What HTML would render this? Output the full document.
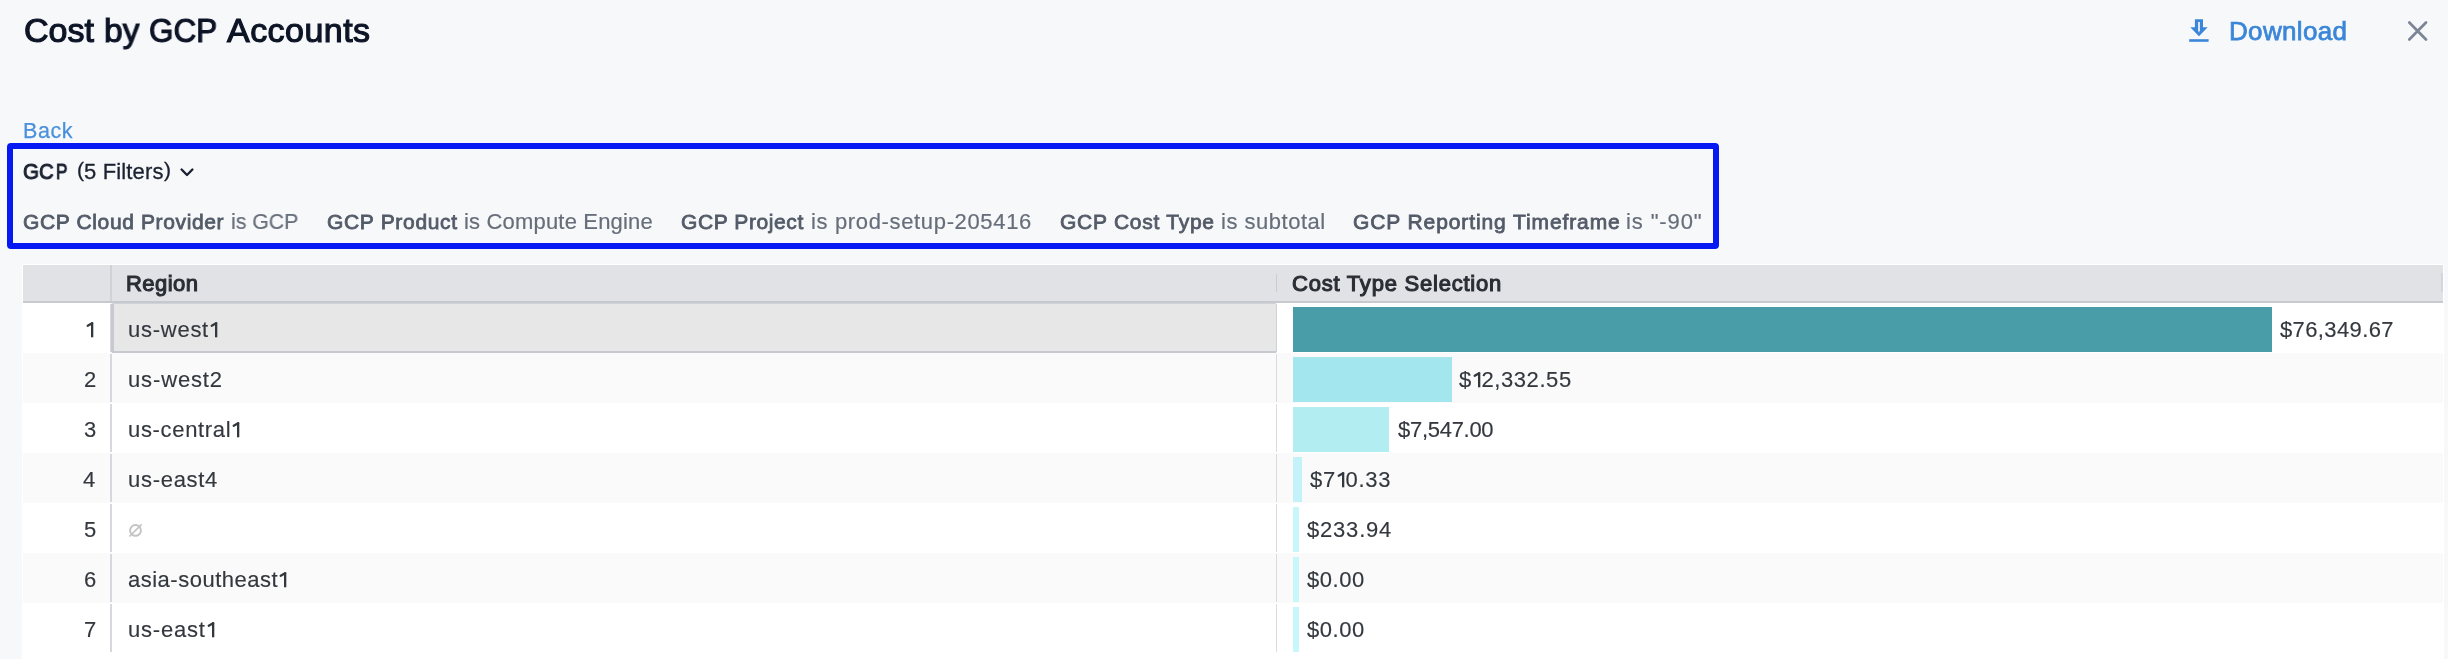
<!DOCTYPE html>
<html><head><meta charset="utf-8"><style>
div,svg{will-change:transform;}
html,body{margin:0;padding:0;background:#ffffff;width:2448px;height:672px;overflow:hidden;font-family:"Liberation Sans", sans-serif;}
</style></head><body>
<div style="position:absolute;left:0px;top:0px;width:2448px;height:659px;background:#f7f8fa"></div>
<div style="position:absolute;left:23.56px;top:13px;font-size:34px;line-height:34px;font-weight:400;color:#0c1426;letter-spacing:0.008px;white-space:pre;-webkit-text-stroke:1.15px #0c1426">Cost</div>
<div style="position:absolute;left:103.78px;top:13px;font-size:34px;line-height:34px;font-weight:400;color:#0c1426;transform:scaleX(0.9842);transform-origin:0 0;white-space:pre;-webkit-text-stroke:1.15px #0c1426">by</div>
<div style="position:absolute;left:149.44px;top:13px;font-size:34px;line-height:34px;font-weight:400;color:#0c1426;transform:scaleX(0.9245);transform-origin:0 0;white-space:pre;-webkit-text-stroke:1.15px #0c1426">GCP</div>
<div style="position:absolute;left:227.48px;top:13px;font-size:34px;line-height:34px;font-weight:400;color:#0c1426;letter-spacing:0.460px;white-space:pre;-webkit-text-stroke:1.15px #0c1426">Accounts</div>
<svg style="position:absolute;left:2186px;top:16px" width="26" height="30" viewBox="0 0 26 30">
<path d="M8.9 3.2 H17 V11.3 H21.7 L12.95 20.2 L4.3 11.3 H8.9 Z" fill="#3b86d8"/>
<path d="M12.15 5.9 H13.85 V14.2 L13 16.8 L12.15 14.2 Z" fill="#f7f8fa"/>
<rect x="3.2" y="23.2" width="19.4" height="2.6" fill="#3b86d8"/>
</svg>
<div style="position:absolute;left:2229.27px;top:18.1px;font-size:26px;line-height:26px;font-weight:400;color:#3b86d8;letter-spacing:0.346px;white-space:pre;-webkit-text-stroke:0.75px #3b86d8">Download</div>
<svg style="position:absolute;left:2400px;top:14px" width="36" height="36" viewBox="0 0 36 36">
<path d="M9.3 8.5 L26 25.5 M26 8.5 L9.3 25.5" stroke="#7c8595" stroke-width="2.7" stroke-linecap="round"/>
</svg>
<div style="position:absolute;left:22.77px;top:120.9px;font-size:21.5px;line-height:21.5px;font-weight:400;color:#4a90dc;letter-spacing:0.550px;white-space:pre;-webkit-text-stroke:0.25px #4a90dc">Back</div>
<div style="position:absolute;left:7px;top:143px;width:1712px;height:106px;box-sizing:border-box;border:6px solid #0619f2;border-radius:4px"></div>
<div style="position:absolute;left:23.03px;top:161.9px;font-size:21.5px;line-height:21.5px;font-weight:400;color:#1a2130;transform:scaleX(0.9528);transform-origin:0 0;white-space:pre;-webkit-text-stroke:1.0px #1a2130">G</div>
<div style="position:absolute;left:39.03px;top:161.9px;font-size:21.5px;line-height:21.5px;font-weight:400;color:#1a2130;transform:scaleX(0.9450);transform-origin:0 0;white-space:pre;-webkit-text-stroke:1.0px #1a2130">C</div>
<div style="position:absolute;left:56.33px;top:161.9px;font-size:21.5px;line-height:21.5px;font-weight:400;color:#1a2130;transform:scaleX(0.7981);transform-origin:0 0;white-space:pre;-webkit-text-stroke:1.0px #1a2130">P</div>
<div style="position:absolute;left:76.57px;top:159px;font-size:21px;line-height:21px;font-weight:400;color:#1a2130;letter-spacing:0.000px;white-space:pre;-webkit-text-stroke:0.3px #1a2130">(</div>
<div style="position:absolute;left:84.11px;top:160.9px;font-size:22px;line-height:22px;font-weight:400;color:#1a2130;letter-spacing:0.145px;white-space:pre;-webkit-text-stroke:0.3px #1a2130">5 Filters</div>
<div style="position:absolute;left:163.7px;top:159px;font-size:21px;line-height:21px;font-weight:400;color:#1a2130;letter-spacing:0.000px;white-space:pre;-webkit-text-stroke:0.3px #1a2130">)</div>
<svg style="position:absolute;left:178px;top:165px" width="18" height="14" viewBox="0 0 18 14">
<path d="M3.6 4.5 L9 10 L14.4 4.5" fill="none" stroke="#1a2130" stroke-width="2.4" stroke-linecap="round" stroke-linejoin="round"/>
</svg>
<div style="position:absolute;left:23.22px;top:210.5px;font-size:21px;line-height:21px;font-weight:400;color:#535b68;letter-spacing:0.629px;white-space:pre;-webkit-text-stroke:0.8px #535b68">GCP Cloud Provider</div>
<div style="position:absolute;left:231.05px;top:210.5px;font-size:22px;line-height:22px;font-weight:400;color:#666e7a;transform:scaleX(0.9664);transform-origin:0 0;white-space:pre;-webkit-text-stroke:0.2px #666e7a">is GCP</div>
<div style="position:absolute;left:327.02px;top:210.5px;font-size:21px;line-height:21px;font-weight:400;color:#535b68;letter-spacing:0.679px;white-space:pre;-webkit-text-stroke:0.8px #535b68">GCP Product</div>
<div style="position:absolute;left:464.02px;top:210.5px;font-size:22px;line-height:22px;font-weight:400;color:#666e7a;letter-spacing:0.179px;white-space:pre;-webkit-text-stroke:0.2px #666e7a">is Compute Engine</div>
<div style="position:absolute;left:681.42px;top:210.5px;font-size:21px;line-height:21px;font-weight:400;color:#535b68;letter-spacing:0.589px;white-space:pre;-webkit-text-stroke:0.8px #535b68">GCP Project</div>
<div style="position:absolute;left:810.52px;top:210.5px;font-size:22px;line-height:22px;font-weight:400;color:#666e7a;letter-spacing:0.650px;white-space:pre;-webkit-text-stroke:0.2px #666e7a">is prod-setup-205416</div>
<div style="position:absolute;left:1059.72px;top:210.5px;font-size:21px;line-height:21px;font-weight:400;color:#535b68;letter-spacing:0.740px;white-space:pre;-webkit-text-stroke:0.8px #535b68">GCP Cost Type</div>
<div style="position:absolute;left:1220.72px;top:210.5px;font-size:22px;line-height:22px;font-weight:400;color:#666e7a;letter-spacing:0.512px;white-space:pre;-webkit-text-stroke:0.2px #666e7a">is subtotal</div>
<div style="position:absolute;left:1353.32px;top:210.5px;font-size:21px;line-height:21px;font-weight:400;color:#535b68;letter-spacing:0.895px;white-space:pre;-webkit-text-stroke:0.8px #535b68">GCP Reporting Timeframe</div>
<div style="position:absolute;left:1626.32px;top:210.5px;font-size:22px;line-height:22px;font-weight:400;color:#666e7a;letter-spacing:0.878px;white-space:pre;-webkit-text-stroke:0.2px #666e7a">is &quot;-90&quot;</div>
<div style="position:absolute;left:22px;top:264px;width:2422px;height:395px;background:#ffffff"></div>
<div style="position:absolute;left:23px;top:265px;width:2420px;height:36px;background:#e1e2e6"></div>
<div style="position:absolute;left:23px;top:301px;width:2420px;height:2px;background:#c6cacf"></div>
<div style="position:absolute;left:110px;top:265px;width:2px;height:36px;background:#cfd2d7"></div>
<div style="position:absolute;left:1276px;top:274px;width:1px;height:18px;background:#c9ccd1"></div>
<div style="position:absolute;left:2441px;top:273px;width:2px;height:19px;background:#d2d5da"></div>
<div style="position:absolute;left:126.14px;top:273.2px;font-size:22px;line-height:22px;font-weight:400;color:#2a2e35;letter-spacing:0.430px;white-space:pre;-webkit-text-stroke:1.1px #2a2e35">Region</div>
<div style="position:absolute;left:1291.72px;top:273.2px;font-size:22px;line-height:22px;font-weight:400;color:#2a2e35;letter-spacing:0.779px;white-space:pre;-webkit-text-stroke:1.1px #2a2e35">Cost Type Selection</div>
<div style="position:absolute;left:110px;top:304px;width:2px;height:48px;background:#d5d8dc"></div>
<div style="position:absolute;left:1276px;top:304px;width:1px;height:48px;background:#d8dbdf"></div>
<div style="position:absolute;left:111px;top:303px;width:1166px;height:50px;box-sizing:border-box;background:#e7e7e7;border-left:3px solid #c6cacf;border-top:1px solid #cfd3d7;border-bottom:2px solid #c6cacf;border-right:1px solid #cfd2d6;border-radius:2px"></div>
<div style="position:absolute;left:85.06px;top:319px;font-size:22px;line-height:22px;font-weight:400;color:#33373e;letter-spacing:0.000px;white-space:pre;-webkit-text-stroke:0.15px #33373e"><span style="display:inline-block;width:9.0px;height:22px;vertical-align:top;margin-right:0.000px;position:relative"><svg style="position:absolute;left:0;top:0" width="9.0" height="22" viewBox="0 0 9.0 22"><path d="M6.00 3.4 H8.3 V18.3 H6.00 Z" fill="#33373e"/><path d="M7.10 4.30 L2.70 6.80" stroke="#33373e" stroke-width="2.3" stroke-linecap="round"/></svg></span></div>
<div style="position:absolute;left:127.79px;top:319px;font-size:22px;line-height:22px;font-weight:400;color:#33373e;letter-spacing:0.739px;white-space:pre;-webkit-text-stroke:0.15px #33373e">us-west<span style="display:inline-block;width:9.0px;height:22px;vertical-align:top;margin-right:0.739px;position:relative"><svg style="position:absolute;left:0;top:0" width="9.0" height="22" viewBox="0 0 9.0 22"><path d="M6.00 3.4 H8.3 V18.3 H6.00 Z" fill="#33373e"/><path d="M7.10 4.30 L2.70 6.80" stroke="#33373e" stroke-width="2.3" stroke-linecap="round"/></svg></span></div>
<div style="position:absolute;left:1293px;top:307px;width:978.7px;height:44.6px;background:#489da8"></div>
<div style="position:absolute;left:2279.66px;top:319px;font-size:22px;line-height:22px;font-weight:400;color:#33373e;letter-spacing:0.387px;white-space:pre;-webkit-text-stroke:0.15px #33373e">$76,349.67</div>
<div style="position:absolute;left:23px;top:353px;width:2420px;height:50px;background:#fafafa"></div>
<div style="position:absolute;left:110px;top:354px;width:2px;height:48px;background:#d5d8dc"></div>
<div style="position:absolute;left:1276px;top:354px;width:1px;height:48px;background:#d8dbdf"></div>
<div style="position:absolute;left:83.67px;top:369px;font-size:22px;line-height:22px;font-weight:400;color:#33373e;letter-spacing:0.000px;white-space:pre;-webkit-text-stroke:0.15px #33373e">2</div>
<div style="position:absolute;left:127.79px;top:369px;font-size:22px;line-height:22px;font-weight:400;color:#33373e;letter-spacing:0.865px;white-space:pre;-webkit-text-stroke:0.15px #33373e">us-west2</div>
<div style="position:absolute;left:1293px;top:357px;width:158.8px;height:44.6px;background:#a3e6ed"></div>
<div style="position:absolute;left:1459.06px;top:369px;font-size:22px;line-height:22px;font-weight:400;color:#33373e;letter-spacing:0.588px;white-space:pre;-webkit-text-stroke:0.15px #33373e">$<span style="display:inline-block;width:9.0px;height:22px;vertical-align:top;margin-right:0.588px;position:relative"><svg style="position:absolute;left:0;top:0" width="9.0" height="22" viewBox="0 0 9.0 22"><path d="M6.00 3.4 H8.3 V18.3 H6.00 Z" fill="#33373e"/><path d="M7.10 4.30 L2.70 6.80" stroke="#33373e" stroke-width="2.3" stroke-linecap="round"/></svg></span>2,332.55</div>
<div style="position:absolute;left:110px;top:404px;width:2px;height:48px;background:#d5d8dc"></div>
<div style="position:absolute;left:1276px;top:404px;width:1px;height:48px;background:#d8dbdf"></div>
<div style="position:absolute;left:83.58px;top:419px;font-size:22px;line-height:22px;font-weight:400;color:#33373e;letter-spacing:0.000px;white-space:pre;-webkit-text-stroke:0.15px #33373e">3</div>
<div style="position:absolute;left:127.79px;top:419px;font-size:22px;line-height:22px;font-weight:400;color:#33373e;letter-spacing:0.667px;white-space:pre;-webkit-text-stroke:0.15px #33373e">us-central<span style="display:inline-block;width:9.0px;height:22px;vertical-align:top;margin-right:0.667px;position:relative"><svg style="position:absolute;left:0;top:0" width="9.0" height="22" viewBox="0 0 9.0 22"><path d="M6.00 3.4 H8.3 V18.3 H6.00 Z" fill="#33373e"/><path d="M7.10 4.30 L2.70 6.80" stroke="#33373e" stroke-width="2.3" stroke-linecap="round"/></svg></span></div>
<div style="position:absolute;left:1293px;top:407px;width:96.4px;height:44.6px;background:#b2eef1"></div>
<div style="position:absolute;left:1397.86px;top:419px;font-size:22px;line-height:22px;font-weight:400;color:#33373e;letter-spacing:-0.285px;white-space:pre;-webkit-text-stroke:0.15px #33373e">$7,547.00</div>
<div style="position:absolute;left:23px;top:453px;width:2420px;height:50px;background:#fafafa"></div>
<div style="position:absolute;left:110px;top:454px;width:2px;height:48px;background:#d5d8dc"></div>
<div style="position:absolute;left:1276px;top:454px;width:1px;height:48px;background:#d8dbdf"></div>
<div style="position:absolute;left:83.3px;top:469px;font-size:22px;line-height:22px;font-weight:400;color:#33373e;letter-spacing:0.000px;white-space:pre;-webkit-text-stroke:0.15px #33373e">4</div>
<div style="position:absolute;left:127.79px;top:469px;font-size:22px;line-height:22px;font-weight:400;color:#33373e;letter-spacing:0.709px;white-space:pre;-webkit-text-stroke:0.15px #33373e">us-east4</div>
<div style="position:absolute;left:1293px;top:457px;width:9.2px;height:44.6px;background:#c3f3f8"></div>
<div style="position:absolute;left:1309.66px;top:469px;font-size:22px;line-height:22px;font-weight:400;color:#33373e;letter-spacing:0.703px;white-space:pre;-webkit-text-stroke:0.15px #33373e">$7<span style="display:inline-block;width:9.0px;height:22px;vertical-align:top;margin-right:0.703px;position:relative"><svg style="position:absolute;left:0;top:0" width="9.0" height="22" viewBox="0 0 9.0 22"><path d="M6.00 3.4 H8.3 V18.3 H6.00 Z" fill="#33373e"/><path d="M7.10 4.30 L2.70 6.80" stroke="#33373e" stroke-width="2.3" stroke-linecap="round"/></svg></span>0.33</div>
<div style="position:absolute;left:110px;top:504px;width:2px;height:48px;background:#d5d8dc"></div>
<div style="position:absolute;left:1276px;top:504px;width:1px;height:48px;background:#d8dbdf"></div>
<div style="position:absolute;left:83.55px;top:519px;font-size:22px;line-height:22px;font-weight:400;color:#33373e;letter-spacing:0.000px;white-space:pre;-webkit-text-stroke:0.15px #33373e">5</div>
<svg style="position:absolute;left:126px;top:522px" width="18" height="18" viewBox="0 0 18 18"><circle cx="9.5" cy="8.4" r="5.4" fill="none" stroke="#c4c4c4" stroke-width="1.9"/><path d="M3.9 14 L15.1 2.8" stroke="#c4c4c4" stroke-width="1.7" stroke-linecap="round"/></svg>
<div style="position:absolute;left:1293px;top:507px;width:5.5px;height:44.6px;background:#c9f6fa"></div>
<div style="position:absolute;left:1306.96px;top:519px;font-size:22px;line-height:22px;font-weight:400;color:#33373e;letter-spacing:0.799px;white-space:pre;-webkit-text-stroke:0.15px #33373e">$233.94</div>
<div style="position:absolute;left:23px;top:553px;width:2420px;height:50px;background:#fafafa"></div>
<div style="position:absolute;left:110px;top:554px;width:2px;height:48px;background:#d5d8dc"></div>
<div style="position:absolute;left:1276px;top:554px;width:1px;height:48px;background:#d8dbdf"></div>
<div style="position:absolute;left:83.61px;top:569px;font-size:22px;line-height:22px;font-weight:400;color:#33373e;letter-spacing:0.000px;white-space:pre;-webkit-text-stroke:0.15px #33373e">6</div>
<div style="position:absolute;left:128.37px;top:569px;font-size:22px;line-height:22px;font-weight:400;color:#33373e;letter-spacing:0.500px;white-space:pre;-webkit-text-stroke:0.15px #33373e">asia-southeast<span style="display:inline-block;width:9.0px;height:22px;vertical-align:top;margin-right:0.500px;position:relative"><svg style="position:absolute;left:0;top:0" width="9.0" height="22" viewBox="0 0 9.0 22"><path d="M6.00 3.4 H8.3 V18.3 H6.00 Z" fill="#33373e"/><path d="M7.10 4.30 L2.70 6.80" stroke="#33373e" stroke-width="2.3" stroke-linecap="round"/></svg></span></div>
<div style="position:absolute;left:1293px;top:557px;width:5.5px;height:44.6px;background:#c9f6fa"></div>
<div style="position:absolute;left:1306.96px;top:569px;font-size:22px;line-height:22px;font-weight:400;color:#33373e;letter-spacing:0.555px;white-space:pre;-webkit-text-stroke:0.15px #33373e">$0.00</div>
<div style="position:absolute;left:110px;top:604px;width:2px;height:48px;background:#d5d8dc"></div>
<div style="position:absolute;left:1276px;top:604px;width:1px;height:48px;background:#d8dbdf"></div>
<div style="position:absolute;left:83.67px;top:619px;font-size:22px;line-height:22px;font-weight:400;color:#33373e;letter-spacing:0.000px;white-space:pre;-webkit-text-stroke:0.15px #33373e">7</div>
<div style="position:absolute;left:127.79px;top:619px;font-size:22px;line-height:22px;font-weight:400;color:#33373e;letter-spacing:0.803px;white-space:pre;-webkit-text-stroke:0.15px #33373e">us-east<span style="display:inline-block;width:9.0px;height:22px;vertical-align:top;margin-right:0.803px;position:relative"><svg style="position:absolute;left:0;top:0" width="9.0" height="22" viewBox="0 0 9.0 22"><path d="M6.00 3.4 H8.3 V18.3 H6.00 Z" fill="#33373e"/><path d="M7.10 4.30 L2.70 6.80" stroke="#33373e" stroke-width="2.3" stroke-linecap="round"/></svg></span></div>
<div style="position:absolute;left:1293px;top:607px;width:5.5px;height:44.6px;background:#c9f6fa"></div>
<div style="position:absolute;left:1306.96px;top:619px;font-size:22px;line-height:22px;font-weight:400;color:#33373e;letter-spacing:0.555px;white-space:pre;-webkit-text-stroke:0.15px #33373e">$0.00</div>
</body></html>
